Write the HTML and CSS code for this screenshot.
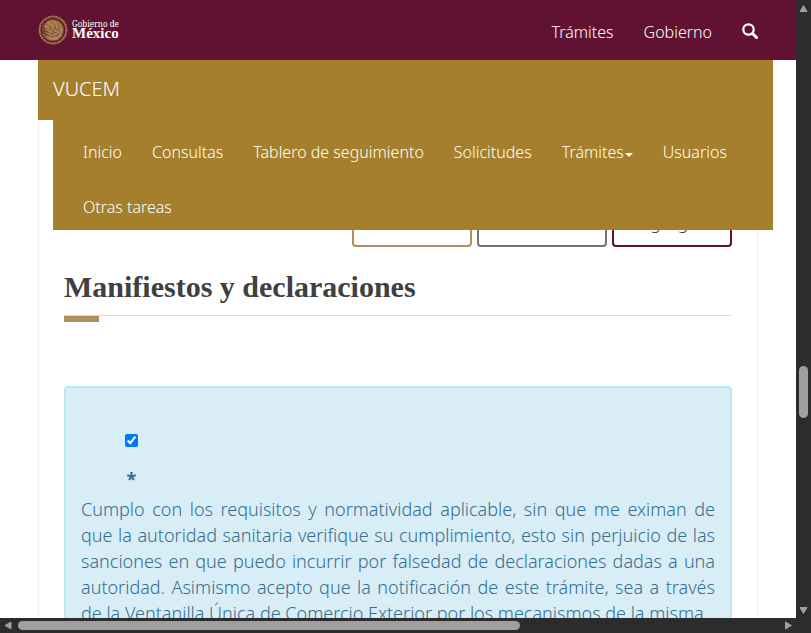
FILE: index.html
```
<!DOCTYPE html>
<html lang="es">
<head>
<meta charset="utf-8">
<meta name="viewport" content="width=device-width, initial-scale=1">
<title>VUCEM</title>
<link rel="stylesheet" href="styles.css">
</head>
<body>
<div class="window">
  <div class="page">
    <header class="site-header">
      <div class="topbar">
        <a class="brand" href="#">
          <svg class="seal" viewBox="0 0 30 30" aria-hidden="true">
            <circle cx="15" cy="15" r="13.4" fill="none" stroke="#a57f4c" stroke-width="2" stroke-dasharray="2 .5"/>
            <circle cx="15" cy="15" r="11.2" fill="#7a4438"/>
            <path d="M6 12c2-5 7-8 12-6 4 1 7 5 7 9-1 5-4 9-9 10-3 0-6-1-8-4l4-1-5-2 4-1-5-3 4 0z" fill="#a98350"/>
            <path d="M8 9l6 4-3 1 5 3M13 7l5 4-2 2 6 3M19 8l3 5-3 2M8 16l6 3 5-2M10 21l5 1 6-3M17 12l-3 9M22 16l-4 6" fill="none" stroke="#7a4438" stroke-width=".7"/>
            <path d="M5 19c3 6 12 9 19 1M10 23l10 1" fill="none" stroke="#b08a52" stroke-width="1"/>
          </svg>
          <span class="brand-text"><span class="brand-small">Gobierno de</span><span class="brand-large">México</span></span>
        </a>
        <nav class="top-links" aria-label="Gobierno">
          <a href="#">Trámites</a>
          <a href="#">Gobierno</a>
          <a class="search" href="#" aria-label="Buscar">
            <svg viewBox="0 0 16 17" aria-hidden="true"><circle cx="6.500" cy="6.500" r="5.200" fill="none" stroke="#fff" stroke-width="2.200"/><path d="M10.500 10.500l4 4" stroke="#fff" stroke-width="3" stroke-linecap="round"/></svg>
          </a>
        </nav>
      </div>
      <div class="subnav">
        <a class="subnav-title" href="#">VUCEM</a>
        <nav class="menu" aria-label="VUCEM">
          <a href="#">Inicio</a>
          <a href="#">Consultas</a>
          <a href="#">Tablero de seguimiento</a>
          <a href="#">Solicitudes</a>
          <a class="dropdown" href="#">Trámites</a>
          <a href="#">Usuarios</a>
          <a href="#">Otras tareas</a>
        </nav>
      </div>
    </header>
    <main class="panel">
      <div class="actions">
        <button class="btn btn-gold" type="button">Eliminar</button>
        <button class="btn btn-gray btn-wide" type="button">Modificar</button>
        <button class="btn btn-wine" type="button">Agregar</button>
      </div>
      <h2 class="section-title">Manifiestos y declaraciones</h2>
      <section class="alert">
        <div class="accept">
          <input type="checkbox" id="manifiesto" checked>
          <span class="required">*</span>
        </div>
        <label class="statement" for="manifiesto">Cumplo con los requisitos y normatividad aplicable, sin que me eximan de que la autoridad sanitaria verifique su cumplimiento, esto sin perjuicio de las sanciones en que puedo incurrir por falsedad de declaraciones dadas a una autoridad. Asimismo acepto que la notificación de este trámite, sea a través de la Ventanilla Única de Comercio Exterior por los mecanismos de la misma.</label>
      </section>
    </main>
  </div>
  <div class="bar bar-y" aria-hidden="true">
    <svg class="arrow" viewBox="0 0 15 15"><path d="M7.500 5.500L11 11.500H4z"/></svg>
    <div class="track"><div class="thumb"></div></div>
    <svg class="arrow" viewBox="0 0 15 15"><path d="M7.500 10.500L11 4.500H4z"/></svg>
  </div>
  <div class="bar bar-x" aria-hidden="true">
    <svg class="arrow" viewBox="0 0 15 15"><path d="M5 7.500L11 4v7z"/></svg>
    <div class="track"><div class="thumb"></div></div>
    <svg class="arrow" viewBox="0 0 15 15"><path d="M10.500 7.500L4.500 4v7z"/></svg>
  </div>
</div>
</body>
</html>
```
FILE: styles.css
```
* { box-sizing: border-box; }
body {
  margin: 0;
  background: #fff;
  color: #404041;
  font: 300 18px/26px "Noto Sans", "Open Sans", sans-serif;
}
a { color: inherit; text-decoration: none; }
.window {
  display: grid;
  grid-template-columns: minmax(0, 1fr) 15px;
  grid-template-rows: minmax(0, 1fr) 15px;
  height: 100vh;
  background: #2c2c2c;
}
.page { position: relative; overflow: hidden; background: #fff; }

/* Header laid over the scrolled content */
.site-header { position: absolute; top: 0; left: 0; right: 0; z-index: 1; color: #fff; }
.topbar {
  display: flex;
  justify-content: space-between;
  align-items: center;
  height: 60px;
  padding: 0 38px;
  background: #611232;
}
.brand { display: flex; align-items: center; gap: 4px; }
.seal { width: 30px; height: 30px; }
.brand-text { display: flex; flex-direction: column; padding-bottom: 2px; }
.brand-small { font: 400 8px/9px "Noto Serif", "Liberation Serif", serif; }
.brand-large { font: 700 15px/11px "Liberation Serif", serif; }
.top-links { display: flex; align-items: center; gap: 30px; font-size: 16px; padding-top: 4px; }
.search svg { display: block; width: 16px; height: 17px; margin-bottom: 2px; }
.subnav { margin: 0 23px 0 38px; }
.subnav-title {
  display: block;
  padding: 16px 15px 18px;
  background: #a57f2c;
  font-size: 20px;
}
.menu {
  display: flex;
  flex-wrap: wrap;
  gap: 10px 30px;
  margin-left: 15px;
  padding: 10px 30px 0;
  background: #a57f2c;
  font-size: 16px;
  line-height: 45px;
}
.dropdown { display: flex; align-items: center; gap: 1px; }
.dropdown::after {
  content: "";
  margin-top: 4px;
  border: 4px solid transparent;
  border-top-color: #fff;
  border-bottom: 0;
}

/* Content panel */
.panel {
  min-height: 100%;
  margin: 0 38px;
  padding: 203px 25px 0;
  border: 1px solid #eee;
  border-top: 0;
}
.actions { display: flex; justify-content: flex-end; gap: 5px; }
.btn {
  width: 120px;
  height: 44px;
  padding: 0 0 6px;
  background: #fff;
  border: 2px solid;
  border-radius: 4px;
  font: inherit;
  color: inherit;
}
.btn-wide { width: 130px; }
.btn-gold { border-color: #b38e5d; }
.btn-gray { border-color: #727272; }
.btn-wine { border-color: #611232; }
.section-title {
  margin: 20px 0 64px;
  color: #404041;
  font: 700 30px/40px "Liberation Serif", serif;
}
.section-title::after {
  content: "";
  display: block;
  height: 6px;
  margin-top: 8px;
  border-top: 1px solid #ddd;
  background: linear-gradient(#b38e5d, #b38e5d) left / 35px 100% no-repeat;
}
.alert {
  padding: 45px 15px 15px;
  background: #d9edf7;
  border: 2px solid #bce8f1;
  border-radius: 4px;
  color: #31708f;
}
.accept {
  display: flex;
  flex-direction: column;
  align-items: center;
  width: 13px;
  margin-left: 44px;
}
.accept input { width: 13px; height: 13px; margin: 1px 0 19px; }
.required { margin-bottom: 4px; font-weight: 700; }
.statement { display: block; text-align: justify; }

/* Scrollbars */
.bar { display: flex; }
.bar-y { flex-direction: column; }
.arrow { flex: none; width: 15px; height: 15px; fill: #9f9f9f; stroke: #9f9f9f; stroke-width: 1; stroke-linejoin: round; }
.track { display: flex; flex: 1; }
.thumb { background: #9f9f9f; border-radius: 5px; }
.bar-y .track { flex-direction: column; padding: 0 3px; }
.bar-y .thumb { height: 52px; margin-top: auto; }
.bar-y .track::after { content: ""; height: 185px; }
.bar-x .track { padding: 3px; }
.bar-x .thumb { width: 66%; }
```
